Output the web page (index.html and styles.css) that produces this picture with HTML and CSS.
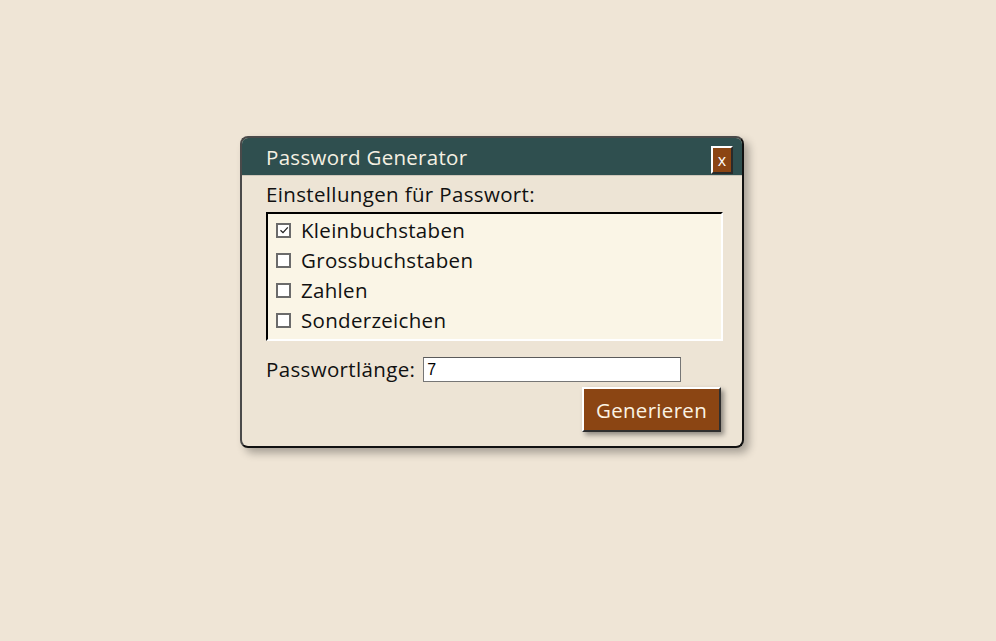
FILE: index.html
```html
<!DOCTYPE html>
<html lang="de">
<head>
<meta charset="utf-8">
<title>Password Generator</title>
<link rel="stylesheet" href="styles.css">
</head>
<body>
<div class="window">
  <div class="titlebar">
    <span class="title">Password Generator</span>
    <button class="close">x</button>
  </div>
  <div class="content">
    <div class="label">Einstellungen für Passwort:</div>
    <div class="options">
      <div class="option"><span class="box"><svg viewBox="0 0 10 10" width="10" height="10"><path d="M1.5 5.2 L4 7.6 L8.8 2.4" fill="none" stroke="#222" stroke-width="1.3"/></svg></span>Kleinbuchstaben</div>
      <div class="option"><span class="box"></span>Grossbuchstaben</div>
      <div class="option"><span class="box"></span>Zahlen</div>
      <div class="option"><span class="box"></span>Sonderzeichen</div>
    </div>
    <div class="length-row">
      <span class="label">Passwortlänge:</span>
      <input class="length" type="text" value="7">
    </div>
    <div class="actions">
      <button class="generate">Generieren</button>
    </div>
  </div>
</div>
</body>
</html>
```
FILE: styles.css
```css
html, body {
  margin: 0;
  padding: 0;
}
body {
  background: #efe5d6;
  font-family: "Open Sans", "DejaVu Sans", sans-serif;
  color: #111;
  padding: 136px 0 0 240px;
  min-height: 641px;
  box-sizing: border-box;
}
.window {
  width: 500px;
  border: 2px solid;
  border-color: #4a4a4a #111 #111 #4a4a4a;
  border-radius: 8px;
  background: #ede4d5;
  box-shadow: 5px 5px 8px rgba(0,0,0,0.3);
  overflow: hidden;
}
.titlebar {
  background: #2f4f4f;
  height: 37px;
  display: flex;
  align-items: flex-end;
  justify-content: space-between;
  padding: 0 9px 0 24px;
  border-bottom: 1px solid #cfc7ba;
}
.title {
  color: #f5f0e2;
  font-size: 20.5px;
  letter-spacing: 0.3px;
  line-height: 36px;
  align-self: center;
}
.close {
  width: 22px;
  height: 28px;
  margin: 0 0 1px 0;
  padding: 0;
  background: #8b4513;
  color: #fff;
  font-family: "Open Sans", sans-serif;
  font-size: 16px;
  border: 2px solid;
  border-color: #fff #2a2a2a #2a2a2a #fff;
  border-style: solid;
}
.content {
  padding: 6px 19px 14px 24px;
}
.label {
  font-size: 20.5px;
  letter-spacing: 0.35px;
  line-height: 24px;
}
.options {
  margin-top: 6px;
  background: #faf5e6;
  border: 2px solid;
  border-color: #000 #fff #fff #000;
  padding: 1px 8px 4px 8px;
}
.option {
  display: flex;
  align-items: center;
  font-size: 20.5px;
  letter-spacing: 0.3px;
  height: 30px;
}
.box {
  width: 11px;
  height: 11px;
  border: 2px solid #6b6b6b;
  background: #fff;
  margin-right: 10px;
  display: flex;
  align-items: center;
  justify-content: center;
}
.length-row {
  display: flex;
  align-items: center;
  margin-top: 14px;
  gap: 8px;
}
.length {
  width: 258px;
  height: 25px;
  box-sizing: border-box;
  border: 1px solid #767676;
  border-top-color: #5a5a5a;
  font-family: "Liberation Sans", Arial, sans-serif;
  font-size: 16px;
  padding: 1px 3px;
  margin-top: 2px;
  background: #fff;
}
.actions {
  display: flex;
  justify-content: flex-end;
  margin-top: 5px;
}
.generate {
  width: 139px;
  height: 45px;
  margin-right: 2px;
  background: #8b4513;
  color: #fbf3e4;
  font-family: "Open Sans", sans-serif;
  font-size: 20.5px;
  letter-spacing: 0.3px;
  border: 2px solid;
  border-color: #fff #2e2e2e #2e2e2e #fff;
  box-shadow: 3px 3px 5px rgba(0,0,0,0.4);
}
```
